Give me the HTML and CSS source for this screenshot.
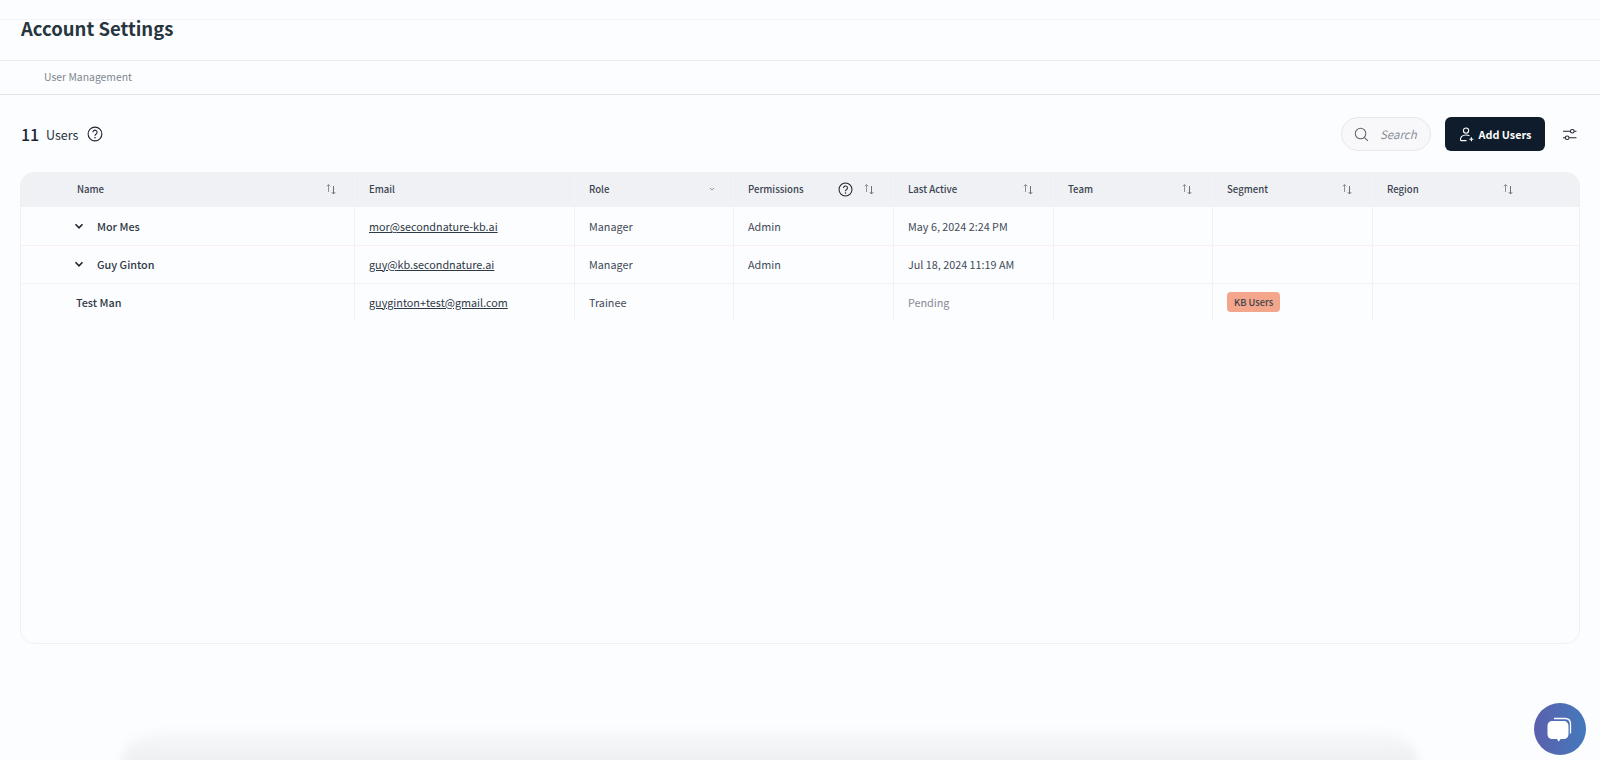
FILE: index.html
```html
<!DOCTYPE html>
<html lang="en">
<head>
<meta charset="utf-8">
<title>Account Settings</title>
<link rel="stylesheet" href="styles.css">
</head>
<body>
<svg class="defs" width="0" height="0" aria-hidden="true">
  <symbol id="sort" viewBox="0 0 12 12">
    <path d="M3.500 9V1.500M1.800 3.300 3.500 1.500l1.700 1.800" fill="none" stroke="#8d939c" stroke-width="1"/>
    <path d="M8.500 3v8M6.800 9.200l1.700 1.800 1.700-1.800" fill="none" stroke="#6a717b" stroke-width="1"/>
  </symbol>
  <symbol id="help" viewBox="0 0 16 16">
    <circle cx="8" cy="8" r="6.900" fill="none" stroke="#1d2530" stroke-width="1.100"/>
    <path d="M5.900 6.300a2.100 2.100 0 1 1 3.300 1.700c-.8.500-1.200.9-1.200 1.800" fill="none" stroke="#1d2530" stroke-width="1.100"/>
    <circle cx="8" cy="11.700" r=".8" fill="#1d2530"/>
  </symbol>
  <symbol id="chev" viewBox="0 0 10 10">
    <path d="M1.500 3.300 5 6.800l3.500-3.500" fill="none" stroke="#1d2530" stroke-width="1.600"/>
  </symbol>
</svg>

<header class="top">
  <h1 class="title">Account Settings</h1>
</header>
<nav class="tabs"><span class="tab">User Management</span></nav>

<main class="content">
  <div class="toolbar">
    <div class="count">
      <strong class="num">11</strong>
      <span class="label">Users</span>
      <svg class="help"><use href="#help"/></svg>
    </div>
    <div class="actions">
      <div class="search">
        <svg class="search-icon" viewBox="0 0 16 16"><circle cx="7" cy="7" r="5.600" fill="none" stroke="#5d646e" stroke-width="1.100"/><path d="m11 11 3.800 3.800" stroke="#5d646e" stroke-width="1.100"/></svg>
        <span class="search-text">Search</span>
      </div>
      <button class="add" type="button">
        <svg class="add-icon" viewBox="0 0 16 16"><circle cx="7.500" cy="3.800" r="2.800" fill="none" stroke="#fff" stroke-width="1.200"/><path d="M1.600 14.500c-.5-4 2-6 5.900-6 1.500 0 2.800.3 3.700 1M2 14.500h6M11 13h4.400M13.200 10.800v4.400" fill="none" stroke="#fff" stroke-width="1.200"/></svg>
        Add Users
      </button>
      <svg class="filter" viewBox="0 0 16 14"><path d="M1 3.500h8M13 3.500h2.500M1 10.500h2.500M7.500 10.500h8" stroke="#1d2530" stroke-width="1.100"/><circle cx="11" cy="3.500" r="2" fill="none" stroke="#1d2530" stroke-width="1.100"/><circle cx="5.500" cy="10.500" r="2" fill="none" stroke="#1d2530" stroke-width="1.100"/></svg>
    </div>
  </div>

  <section class="card">
    <div class="grid head">
      <div class="cell first"><span class="hname">Name</span><svg class="sort"><use href="#sort"/></svg></div>
      <div class="cell"><span>Email</span></div>
      <div class="cell"><span>Role</span><svg class="mini" viewBox="0 0 10 10"><path d="M3 4 5 6l2-2" fill="none" stroke="#8d939c" stroke-width="1"/></svg></div>
      <div class="cell perm"><span>Permissions</span><svg class="help head-help"><use href="#help"/></svg><svg class="sort"><use href="#sort"/></svg></div>
      <div class="cell"><span>Last Active</span><svg class="sort"><use href="#sort"/></svg></div>
      <div class="cell"><span>Team</span><svg class="sort"><use href="#sort"/></svg></div>
      <div class="cell"><span>Segment</span><svg class="sort"><use href="#sort"/></svg></div>
      <div class="cell last"><span>Region</span><svg class="sort"><use href="#sort"/></svg></div>
    </div>

    <div class="grid row">
      <div class="cell first name"><svg class="chev"><use href="#chev"/></svg>Mor Mes</div>
      <div class="cell"><a class="mail" href="#">mor@secondnature-kb.ai</a></div>
      <div class="cell">Manager</div>
      <div class="cell">Admin</div>
      <div class="cell">May 6, 2024 2:24 PM</div>
      <div class="cell"></div>
      <div class="cell"></div>
      <div class="cell"></div>
    </div>
    <div class="grid row pink">
      <div class="cell first name"><svg class="chev"><use href="#chev"/></svg>Guy Ginton</div>
      <div class="cell"><a class="mail" href="#">guy@kb.secondnature.ai</a></div>
      <div class="cell">Manager</div>
      <div class="cell">Admin</div>
      <div class="cell">Jul 18, 2024 11:19 AM</div>
      <div class="cell"></div>
      <div class="cell"></div>
      <div class="cell"></div>
    </div>
    <div class="grid row">
      <div class="cell first name plain">Test Man</div>
      <div class="cell"><a class="mail" href="#">guyginton+test@gmail.com</a></div>
      <div class="cell">Trainee</div>
      <div class="cell"></div>
      <div class="cell pending">Pending</div>
      <div class="cell"></div>
      <div class="cell"><span class="tag">KB Users</span></div>
      <div class="cell"></div>
    </div>
  </section>
</main>

<div class="sheet"></div>
<div class="chat">
  <svg viewBox="0 0 32 32" width="32" height="32"><path d="M10 4.500h11c3.500 0 5.500 2 5.500 5.500v9.500" fill="none" stroke="#fff" stroke-width="1.300"/><path d="M8.500 7h11c3 0 5 2 5 5v8c0 3-2 5-5 5h-3l-1.800 2.800L13 25H8.500c-3 0-5-2-5-5v-8c0-3 2-5 5-5z" fill="#fff"/></svg>
</div>
</body>
</html>
```

FILE: styles.css
```css
* { box-sizing: border-box; }
html, body { height: 100%; }
body {
  margin: 0;
  height: 760px;
  overflow: hidden;
  position: relative;
  background: #fcfdff;
  color: #2b3542;
  font-family: "Noto Sans CJK SC", "Noto Sans", sans-serif;
}
.defs { position: absolute; }

.top {
  height: 61px;
  padding: 19px 20px 0 21px;
  background: linear-gradient(#f2f3f6, #f2f3f6) 0 19px / 100% 1px no-repeat;
  border-bottom: 1px solid #eaebef;
}
.title {
  margin: 0;
  font-size: 18.500px;
  line-height: 18px;
  font-weight: 700;
  color: #27353f;
}
.tabs {
  height: 34px;
  padding: 0 0 2px 44px;
  display: flex;
  align-items: center;
  border-bottom: 1px solid #dfe1e6;
}
.tab { font-size: 10.400px; color: #81878f; }

.content { padding: 0 20px; }
.toolbar {
  height: 77px;
  padding-top: 1px;
  display: flex;
  align-items: center;
  justify-content: space-between;
}
.count { display: flex; align-items: center; }
.num { font-size: 16px; font-weight: 500; color: #1d2530; margin-left: 1px; width: 25px; }
.label { font-size: 12.500px; color: #27303b; width: 41px; }
.help { width: 16px; height: 16px; }
.actions { display: flex; align-items: center; }
.search {
  width: 90px;
  height: 34px;
  border: 1px solid #e6e7ec;
  border-radius: 17px;
  background: #f8f8fb;
  display: flex;
  align-items: center;
  padding-left: 12px;
}
.search-icon { width: 15px; height: 15px; }
.search-text { margin-left: 11px; font-size: 11.500px; font-style: italic; color: #8a9099; }
.add {
  margin-left: 14px;
  width: 100px;
  height: 34px;
  border: 0;
  border-radius: 6px;
  background: #0f1c2b;
  color: #fff;
  font: 700 10.800px "Noto Sans CJK SC", "Noto Sans", sans-serif;
  display: flex;
  align-items: center;
  justify-content: center;
  gap: 5px;
  padding: 0;
}
.add-icon { width: 15px; height: 15px; }
.filter { width: 15px; height: 13px; margin-left: 17px; margin-right: 3px; }

.card {
  width: 1560px;
  height: 472px;
  border: 1px solid #f1eff2;
  border-radius: 14px;
  overflow: hidden;
}
.grid {
  display: grid;
  grid-template-columns: 334px 220px 159px 160px 160px 159px 160px 1fr;
}
.head { height: 34px; background: #f0f1f4; font-size: 9.600px; font-weight: 500; color: #3a4350; }
.head .cell { border-right: 1px solid #f3f4f7; padding-bottom: 2px; }
.row { height: 38px; font-size: 10.800px; color: #434b57; }
.row + .row { border-top: 1px solid #f2f3f7; }
.row + .row .cell { padding-bottom: 2px; }
.row + .row.pink { border-top-color: #f9eff0; }
.cell {
  display: flex;
  align-items: center;
  justify-content: space-between;
  padding: 0 14px;
  border-right: 1px solid #f0f1f5;
  white-space: nowrap;
}
.row .cell:last-child, .head .cell:last-child { border-right: 0; }
.row .cell { justify-content: flex-start; }
.head .cell.last { justify-content: flex-start; }
.first { padding-left: 56px; }
.first.name { padding-left: 53px; font-weight: 500; color: #2f3845; }
.first.name.plain { padding-left: 55px; }
.sort { width: 12px; height: 12px; margin-right: 5px; }
.first .sort { margin-right: 3px; }
.perm .sort { margin-right: 4px; }
.last .sort { margin-left: 83px; }
.mini { width: 10px; height: 10px; margin-right: 2px; }
.perm .head-help { width: 15px; height: 15px; margin-left: auto; margin-right: 10px; }
.chev { width: 10px; height: 10px; margin-right: 13px; }
.mail { color: #2f3845; text-decoration: underline; }
.pending { color: #858b94; }
.tag {
  display: inline-block;
  background: #f4a68c;
  border-radius: 4px;
  color: #3a3f48;
  font-size: 9.300px;
  font-weight: 500;
  line-height: 20px;
  padding: 0 7px;
}

.sheet {
  position: absolute;
  left: 122px;
  top: 731px;
  width: 1296px;
  height: 60px;
  border-radius: 40px 40px 0 0 / 30px 30px 0 0;
  background: linear-gradient(#f8f9fb, #e4e6e8);
  filter: blur(4px);
}
.chat {
  position: absolute;
  left: 1534px;
  top: 703px;
  width: 52px;
  height: 52px;
  border-radius: 50%;
  background: linear-gradient(90deg, #5b60ae, #4479bb);
  display: flex;
  align-items: center;
  justify-content: center;
  padding-top: 1px;
}
```
